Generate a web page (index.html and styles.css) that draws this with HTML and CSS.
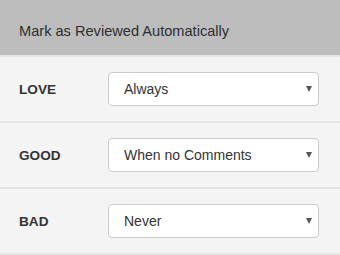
FILE: index.html
```html
<!DOCTYPE html>
<html>
<head>
<meta charset="utf-8">
<link rel="stylesheet" href="styles.css">
</head>
<body>
<div class="panel">
  <div class="header">Mark as Reviewed Automatically</div>
  <div class="rows">
    <div class="row">
      <div class="label">LOVE</div>
      <div class="select-wrap">
        <select class="select"><option>Always</option><option>When no Comments</option><option>Never</option></select>
        <span class="arrow"></span>
      </div>
    </div>
    <div class="row">
      <div class="label">GOOD</div>
      <div class="select-wrap">
        <select class="select"><option>When no Comments</option><option>Always</option><option>Never</option></select>
        <span class="arrow"></span>
      </div>
    </div>
    <div class="row">
      <div class="label">BAD</div>
      <div class="select-wrap">
        <select class="select"><option>Never</option><option>Always</option><option>When no Comments</option></select>
        <span class="arrow"></span>
      </div>
    </div>
  </div>
</div>
</body>
</html>
```
FILE: styles.css
```css
html, body {
  margin: 0;
  padding: 0;
  background: #f4f4f4;
}
body {
  font-family: "Liberation Sans", Arial, sans-serif;
  color: #333;
}
.panel {
  width: 340px;
}
.header {
  height: 55px;
  box-sizing: border-box;
  background: #bdbdbd;
  padding: 6px 19px 0;
  display: flex;
  align-items: center;
  font-size: 14.6px;
  color: #2e2e2e;
}
.rows {
  border-top: 2px solid #e4e4e4;
}
.row {
  height: 64px;
  border-bottom: 2px solid #e4e4e4;
  display: flex;
  align-items: center;
  padding: 0 21px 0 19px;
}
.label {
  width: 89px;
  font-size: 13.6px;
  font-weight: bold;
  color: #333;
}
.select-wrap {
  position: relative;
  flex: 1;
}
.select {
  appearance: none;
  -webkit-appearance: none;
  width: 100%;
  height: 34px;
  box-sizing: border-box;
  border: 1px solid #cccccc;
  border-radius: 4px;
  background: #ffffff;
  padding: 0 30px 0 15px;
  font-family: "Liberation Sans", Arial, sans-serif;
  font-size: 14px;
  color: #333;
  margin: 0;
  display: block;
}
.arrow {
  position: absolute;
  right: 7px;
  top: 14px;
  width: 0;
  height: 0;
  border-left: 3px solid transparent;
  border-right: 3px solid transparent;
  border-top: 6px solid #555;
}
```
